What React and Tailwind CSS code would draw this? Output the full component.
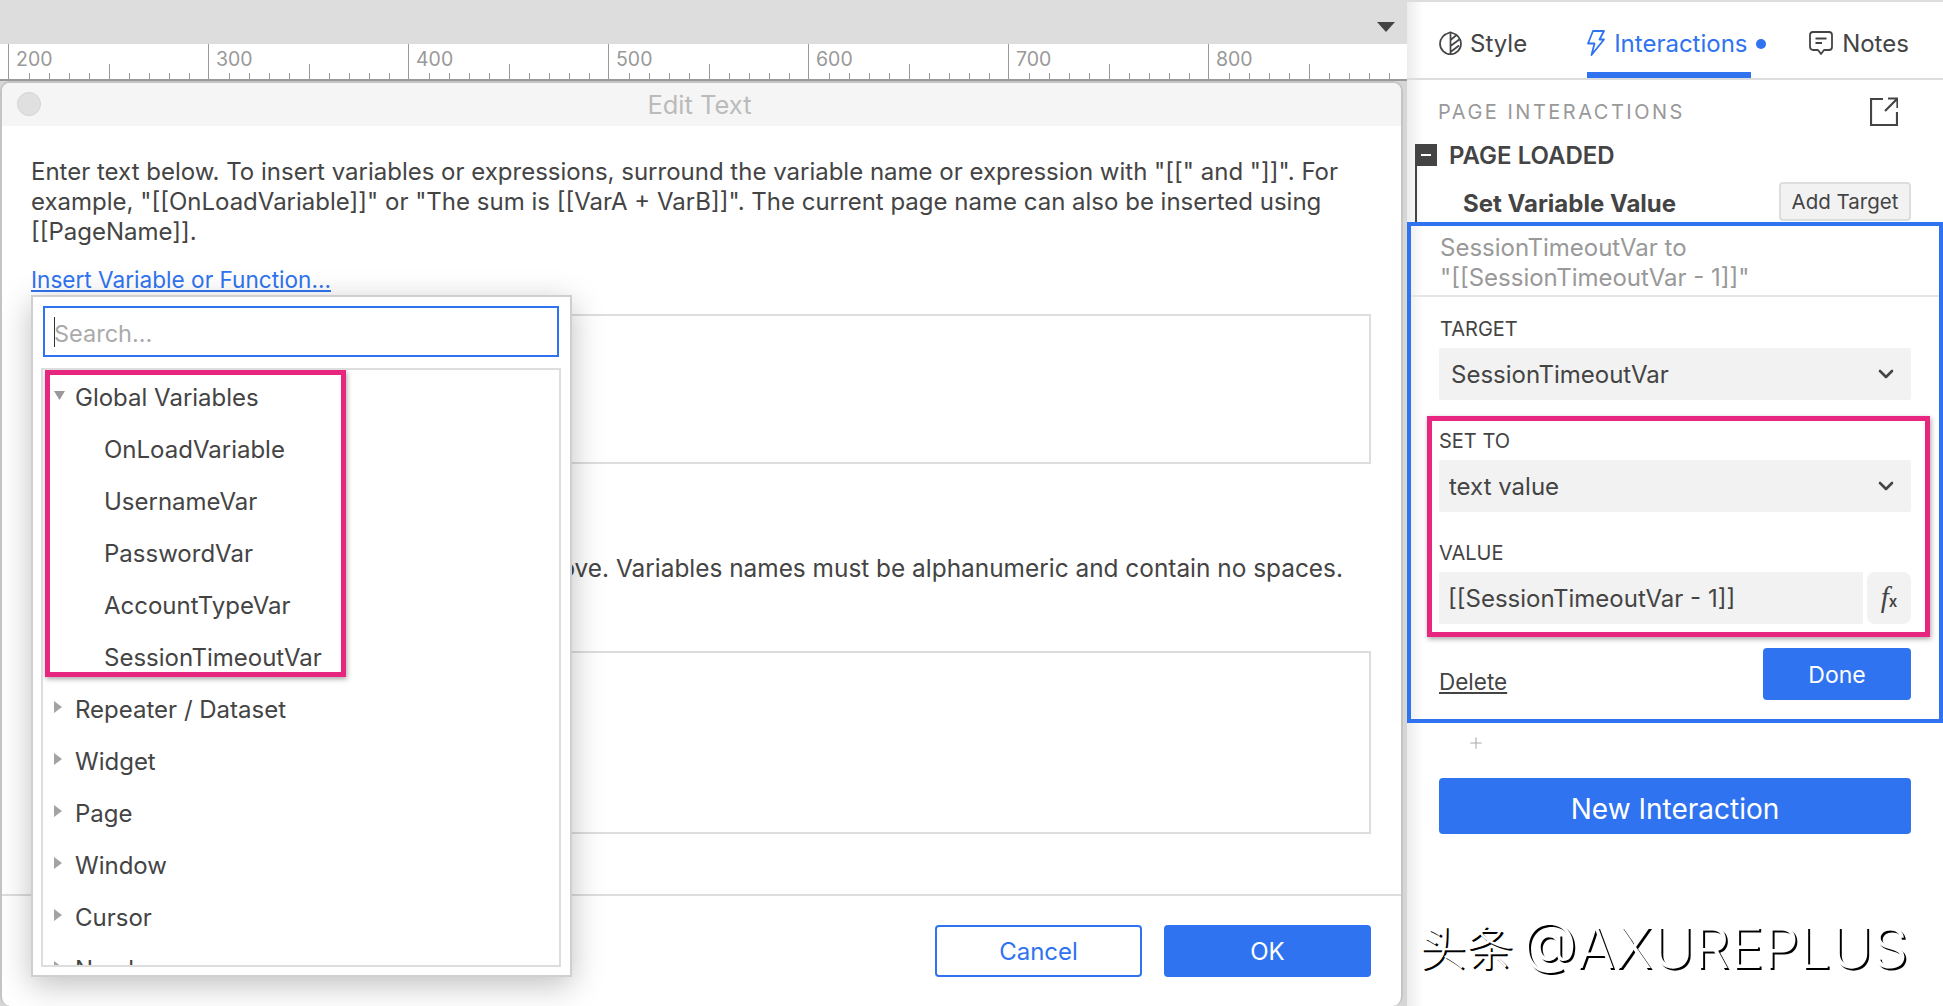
import React from 'react';
import { ChevronDown, Plus } from 'lucide-react';

const FONT = "font-['Inter','Noto_Sans_CJK_SC',sans-serif]";

const RulerSegment = ({ label }) => {
  return (
    <div className="flex h-full w-[200px] shrink-0 flex-col border-l border-[#999]">
      <span className="h-[20px] pl-[7px] pt-[3px] text-[19.5px] leading-[24px] text-[#999]">{label}</span>
      <div className="flex h-[15px] items-end">
        {[0, 1, 2, 3, 4, 5, 6, 7, 8, 9].map((i) => (
          <div key={i} className="w-[20px] shrink-0">
            {i > 0 && <div className={i === 5 ? 'h-[15px] w-px bg-[#999]' : 'h-[6px] w-px bg-[#999]'}></div>}
          </div>
        ))}
      </div>
    </div>
  );
};

const TreeRow = ({ label, open, child }) => {
  return (
    <div className={`flex h-[52px] items-center ${child ? 'pl-[54px]' : open ? 'pl-[4px]' : 'pl-[11px]'}`}>
      {!child && (
        <span className="flex w-[21px] shrink-0 -translate-y-[2px]">
          {open ? (
            <svg width="11" height="9" viewBox="0 0 11 9"><path d="M0 0h11L5.500 9z" fill="#999" /></svg>
          ) : (
            <svg width="8" height="12" viewBox="0 0 8 12"><path d="M0 0l8 6-8 6z" fill="#a3a3a3" /></svg>
          )}
        </span>
      )}
      <span className="whitespace-nowrap pt-[2px] text-[24px] text-[#444]">{label}</span>
    </div>
  );
};

const Label = ({ children }) => (
  <div className="text-[20px] leading-[24px] text-[#444]">{children}</div>
);

const SelectBox = ({ value, pad }) => (
  <div className={`flex h-[52px] items-center justify-between rounded-[2px] bg-[#f2f2f2] pr-[13px] text-[24px] text-[#444] ${pad}`}>
    <span className="pt-[2px]">{value}</span>
    <ChevronDown size={24} strokeWidth={2.6} color="#444" />
  </div>
);

const App = () => {
  return (
    <div className={`flex h-[1006px] w-[1943px] overflow-hidden bg-white ${FONT}`}>

      {/* left side: ruler and dialog */}
      <div className="flex w-[1407px] shrink-0 flex-col bg-[#d6d6d6]">
        <div className="flex h-[44px] items-end justify-end bg-[#dddddd] pb-[12px] pr-[12px]">
          <svg width="18" height="10" viewBox="0 0 18 10"><path d="M0 0h18L9 10z" fill="#444" /></svg>
        </div>
        <div className="flex h-[37px] shrink-0 overflow-hidden border-b-2 border-[#999] bg-white pl-[8px]">
          {[200, 300, 400, 500, 600, 700, 800].map((n) => (
            <RulerSegment key={n} label={n} />
          ))}
        </div>

        {/* Edit Text dialog */}
        <div className="relative flex w-[1403px] flex-1 flex-col rounded-[10px] border-x-2 border-t-2 border-[#c4c4c4] bg-white">
          <div className="relative flex h-[43px] shrink-0 items-center justify-center rounded-t-[8px] bg-[#f5f5f5] pr-[4px] pt-[2px] text-[25.5px] text-[#bbb]">
            <span className="absolute left-[15px] top-[9px] h-[24px] w-[24px] rounded-full border border-[#d4d4d4] bg-[#e0e0e0]"></span>
            Edit Text
          </div>

          <div className="flex flex-1 flex-col pl-[29px] pr-[30px]">
            <p className="mt-[31px] whitespace-nowrap text-[24px] leading-[30px] text-[#444]">
              Enter text below. To insert variables or expressions, surround the variable name or expression with "[[" and "]]". For<br />
              example, "[[OnLoadVariable]]" or "The sum is [[VarA + VarB]]". The current page name can also be inserted using<br />
              [[PageName]].
            </p>
            <div className="mt-[18px] text-[22.6px] leading-[30px]">
              <a href="#" className="text-[#2f73f0] underline">Insert Variable or Function...</a>
            </div>
            <div className="mt-[19px] h-[150px] shrink-0 border-2 border-[#ddd]"></div>
            <p className="mt-[89px] whitespace-nowrap pr-[28px] text-right text-[24.4px] leading-[30px] text-[#444]">
              above. Variables names must be alphanumeric and contain no spaces.
            </p>
            <div className="mt-[68px] h-[183px] shrink-0 border-2 border-[#ddd]"></div>
          </div>

          <div className="flex h-[112px] shrink-0 justify-end gap-[22px] border-t-2 border-[#ddd] pr-[30px] pt-[29px]">
            <button className="h-[52px] w-[207px] rounded-[4px] border-2 border-[#2f73f0] bg-white pt-[2px] text-[24px] text-[#2f73f0]">Cancel</button>
            <button className="h-[52px] w-[207px] rounded-[4px] bg-[#2f73f0] pt-[2px] text-[24px] text-white">OK</button>
          </div>

          {/* variable picker popup */}
          <div className="absolute left-[29px] top-[212px] h-[682px] w-[541px] border-2 border-[#cfcfcf] bg-white px-[10px] pt-[9px] shadow-[0_8px_30px_rgba(0,0,0,0.25)]">
            <div className="flex h-[51px] w-[516px] items-center border-2 border-[#2f73f0] pl-[9px] text-[23.5px] text-[#aaa]">
              <span className="mr-[-1px] h-[30px] w-px bg-[#333]"></span>
              <span className="pt-[4px]">Search...</span>
            </div>
            <div className="-ml-[2px] mt-[11px] h-[599px] w-[520px] overflow-hidden border-2 border-[#ddd]">
              <div className="ml-[2px] h-[307px] w-[301px] border-[5px] border-[#e6267f] shadow-[1px_2px_5px_rgba(0,0,0,0.35)]">
                <div className="-mt-[4px]">
                  <TreeRow label="Global Variables" open />
                  <TreeRow label="OnLoadVariable" child />
                  <TreeRow label="UsernameVar" child />
                  <TreeRow label="PasswordVar" child />
                  <TreeRow label="AccountTypeVar" child />
                  <TreeRow label="SessionTimeoutVar" child />
                </div>
              </div>
              <div className="pt-[6px]">
                {['Repeater / Dataset', 'Widget', 'Page', 'Window', 'Cursor', 'Number'].map((t) => (
                  <TreeRow key={t} label={t} />
                ))}
              </div>
            </div>
          </div>
        </div>
      </div>

      {/* right side: interactions panel */}
      <div className="relative flex flex-1 flex-col border-t-2 border-[#ddd] bg-gradient-to-r from-[#ececec] from-0% via-white via-[3%] to-white">

        <div className="flex h-[78px] shrink-0 border-b-2 border-[#ddd]">
          <div className="flex h-[76px] items-start pl-[32px] pt-[24px] text-[24px] leading-[36px] text-[#444]">
            <svg width="23" height="24" viewBox="0 0 23 24" fill="none" stroke="#444" strokeWidth="1.7" strokeLinejoin="round" className="mr-[8px] mt-[5px]">
              <path d="M11.500 1.200C5.500 3 1 7 1 12.800a10.500 10.500 0 0 0 21 0C22 7 17.500 3 11.500 1.200z" />
              <path d="M11.500 1.500v21.800M11.500 9l5.500-4.500M11.500 15l9.500-7M11.500 21l8.500-6.500" />
            </svg>
            Style
          </div>
          <div className="ml-[60px] flex h-[76px] w-[164px] items-start border-b-[6px] border-[#2f73f0] pt-[24px] text-[24px] leading-[36px] text-[#2f73f0]">
            <svg width="18" height="26" viewBox="0 0 18 26" fill="none" stroke="#2f73f0" strokeWidth="1.8" strokeLinejoin="round" className="mr-[9px] mt-[4px] shrink-0">
              <path d="M6 1h11l-4.500 8.500H17L4.500 25l3-11.500H1z" />
            </svg>
            Interactions
            <span className="ml-[8px] mt-[13px] h-[10px] w-[10px] shrink-0 rounded-full bg-[#2f73f0]"></span>
          </div>
          <div className="ml-[58px] flex h-[76px] items-start pt-[24px] text-[24px] leading-[36px] text-[#444]">
            <svg width="24" height="25" viewBox="0 0 24 25" fill="none" stroke="#444" strokeWidth="1.8" strokeLinejoin="round" className="mr-[9px] mt-[5px]">
              <path d="M4 1h16a3 3 0 0 1 3 3v12a3 3 0 0 1-3 3h-5l-3 4-3-4H4a3 3 0 0 1-3-3V4a3 3 0 0 1 3-3z" />
              <path d="M6.500 7.500h11M6.500 12h6.500" />
            </svg>
            Notes
          </div>
        </div>

        <div className="flex items-center justify-between pl-[31px] pr-[45px] pt-[17px]">
          <span className="pt-[1px] text-[20px] leading-[28px] tracking-[2.5px] text-[#999]">PAGE INTERACTIONS</span>
          <svg width="28" height="29" viewBox="0 0 28 29" fill="none" stroke="#444" strokeWidth="2.2">
            <path d="M13 2H1v26h26V15" />
            <path d="M15 14L27 2M18 1.500h9.500V11" />
          </svg>
        </div>

        <div className="mt-[18px] flex h-[22px] items-center pl-[8px]">
          <span className="flex h-[22px] w-[22px] items-center justify-center bg-[#444]">
            <span className="h-[2px] w-[10px] bg-white"></span>
          </span>
          <span className="ml-[12px] pt-[2px] text-[24px] font-semibold text-[#444]">PAGE LOADED</span>
        </div>
        <div className="ml-[8px] flex h-[56px] items-center justify-between border-l-2 border-[#444] pl-[46px] pr-[32px] pt-[14px]">
          <span className="mt-[5px] text-[24px] font-bold text-[#444]">Set Variable Value</span>
          <span className="mt-[1px] flex h-[39px] w-[132px] items-center justify-center rounded-[4px] border-2 border-[#ddd] bg-[#f2f2f2] pt-[1px] text-[20.5px] text-[#444]">Add Target</span>
        </div>

        {/* selected action editor */}
        <div className="h-[501px] border-4 border-[#2f73f0] pl-[28px] pr-[28px]">
          <div className="-ml-[28px] -mr-[28px] h-[71px] border-b-2 border-[#e5e5e5] pl-[29px] pt-[7px] text-[24px] leading-[30px] text-[#999]">
            SessionTimeoutVar to<br />"[[SessionTimeoutVar - 1]]"
          </div>
          <div className="ml-[1px] mt-[20px]"><Label>TARGET</Label></div>
          <div className="mt-[7px]"><SelectBox value="SessionTimeoutVar" pad="pl-[12px]" /></div>

          <div className="-ml-[12px] -mr-[19px] mt-[16px] h-[221px] border-[5px] border-[#e6267f] pl-[7px] pr-[14px] pt-[8px] shadow-[1px_2px_5px_rgba(0,0,0,0.35)]">
            <Label>SET TO</Label>
            <div className="mt-[7px]"><SelectBox value="text value" pad="pl-[10px]" /></div>
            <div className="mt-[29px]"><Label>VALUE</Label></div>
            <div className="mt-[7px] flex gap-[4px]">
              <div className="flex h-[52px] w-[424px] items-center bg-[#f2f2f2] pl-[9px] pt-[2px] text-[24px] text-[#444]">[[SessionTimeoutVar - 1]]</div>
              <div className="flex h-[52px] w-[44px] items-center justify-center rounded-[8px] bg-[#f2f2f2] font-['Liberation_Serif',serif] text-[29px] italic text-[#444]">
                f<span className="translate-y-[4px] font-['Inter',sans-serif] text-[15px] font-semibold not-italic">x</span>
              </div>
            </div>
          </div>

          <div className="mt-[11px] flex items-start justify-between">
            <a href="#" className="mt-[17px] text-[22.5px] leading-[34px] text-[#444] underline">Delete</a>
            <button className="h-[52px] w-[148px] rounded-[4px] bg-[#2f73f0] pt-[2px] text-[23px] text-white">Done</button>
          </div>
        </div>

        <div className="flex h-[40px] items-center pl-[60px]">
          <Plus size={18} strokeWidth={1.4} color="#aaa" />
        </div>
        <div className="ml-[32px] mt-[15px] flex h-[56px] w-[472px] items-center justify-center rounded-[4px] bg-[#2f73f0] pt-[5px] text-[28px] text-white">
          New Interaction
        </div>

        <div className="ml-[12px] mt-[86px] flex items-center gap-[9px] whitespace-nowrap font-light leading-[56px] text-white [text-shadow:2px_2px_0_#000]">
          <span className="text-[47px]">头条</span>
          <span className="text-[56.5px]">@AXUREPLUS</span>
        </div>
      </div>
    </div>
  );
};

export default App;
